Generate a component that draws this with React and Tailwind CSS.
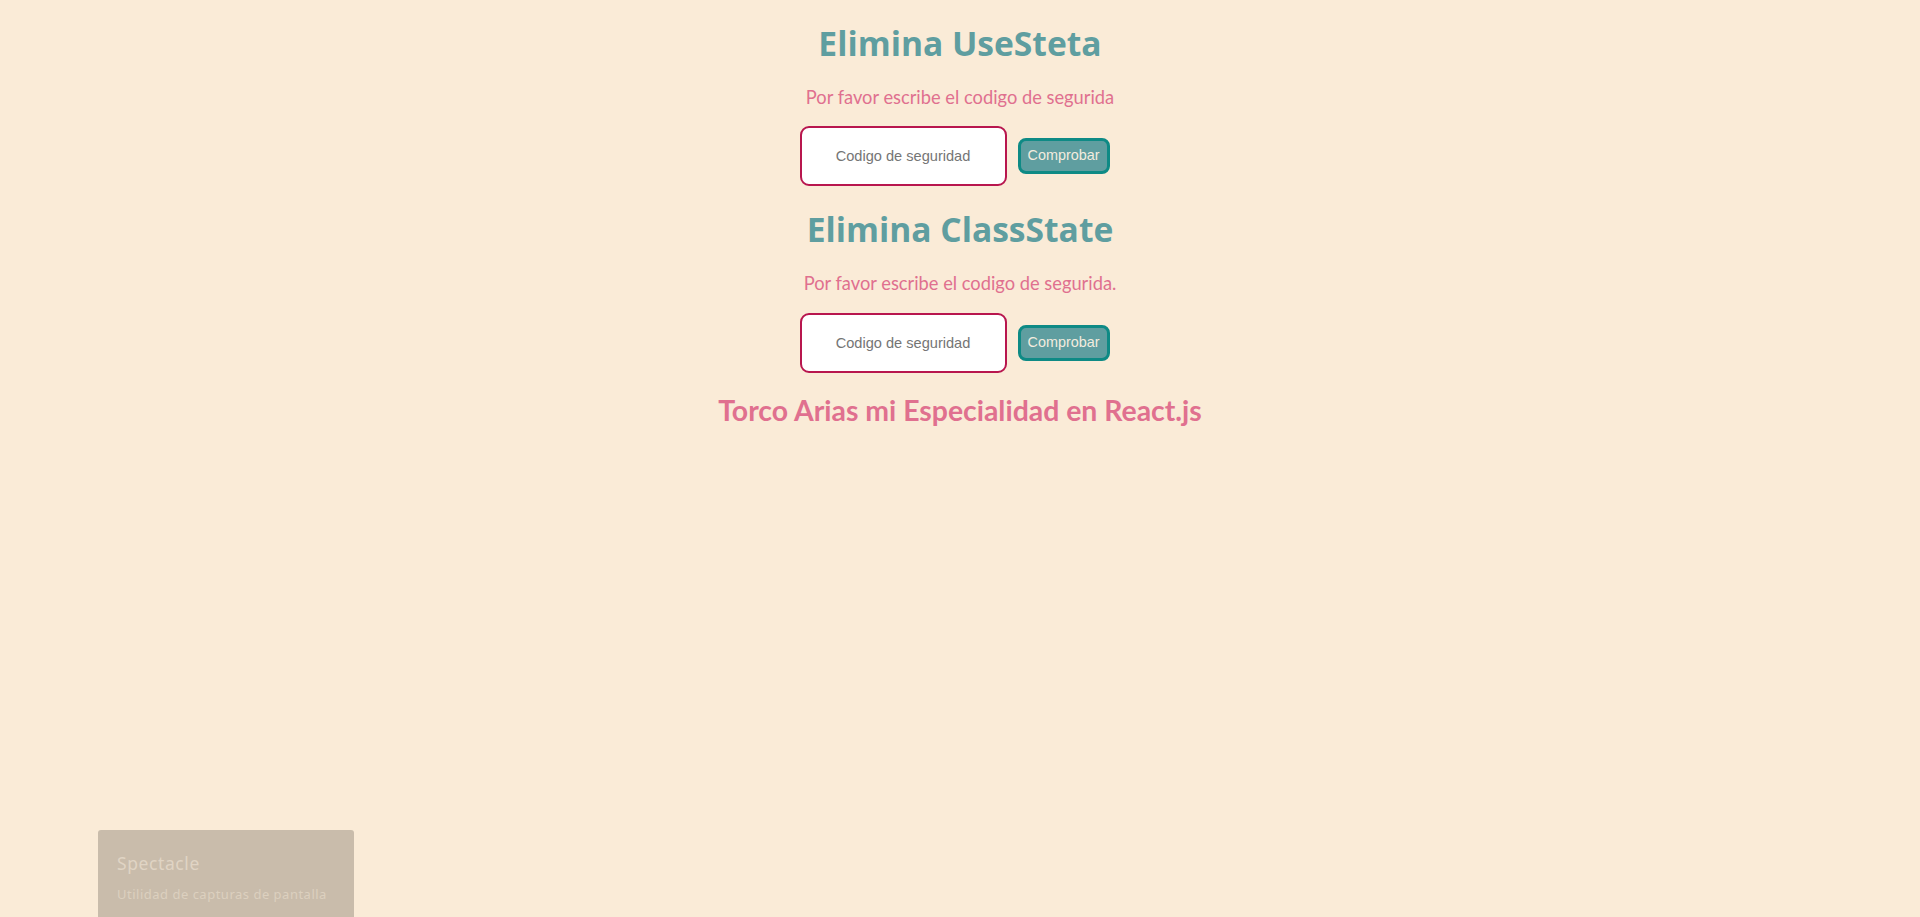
import React, { useState } from "react";

const SecurityBlock = ({ title, subtitle, titleGap }) => {
  const [value, setValue] = useState("");

  return (
    <div className="flex flex-col items-center">
      <h1 className="text-[33.6px] leading-none font-bold text-[#5f9ea0] [font-family:'Open_Sans',sans-serif]">
        {title}
      </h1>
      <p
        className={`${titleGap} text-[18.3px] leading-none text-[#e0708f] [font-family:Lato,sans-serif]`}
      >
        {subtitle}
      </p>
      <div className="mt-[20px] flex items-center gap-[11px] pr-[11px]">
        <input
          value={value}
          onChange={(e) => setValue(e.target.value)}
          placeholder="Codigo de seguridad"
          className="w-[207px] h-[60px] bg-white border-2 border-[#b8164e] rounded-[9px] text-center text-[14.6px] text-gray-700 placeholder:text-[#757575] outline-none [font-family:'Liberation_Sans',Arial,sans-serif]"
        />
        <button className="w-[92px] h-[36px] bg-[#5f9ea0] border-[3px] border-[#0e8a85] rounded-[8px] text-[14.4px] text-[#f3ecdf] [font-family:'Liberation_Sans',Arial,sans-serif]">
          Comprobar
        </button>
      </div>
    </div>
  );
};

const App = () => {
  return (
    <div className="relative min-h-screen bg-[#faebd7] flex flex-col items-center pt-[27px] overflow-hidden">
      <SecurityBlock
        title="Elimina UseSteta"
        subtitle="Por favor escribe el codigo de segurida"
        titleGap="mt-[27px]"
      />
      <div className="mt-[27px]">
        <SecurityBlock
          title="Elimina ClassState"
          subtitle="Por favor escribe el codigo de segurida."
          titleGap="mt-[28px]"
        />
      </div>
      <h2 className="mt-[23px] text-[28.4px] leading-none font-bold text-[#e0708f] [font-family:Lato,sans-serif]">
        Torco Arias mi Especialidad en React.js
      </h2>

      {/* notificación del sistema */}
      <div className="absolute left-[98px] top-[830px] w-[256px] h-[100px] rounded-t-[3px] bg-[#c9bcab] px-[19px] pt-[25px] [font-family:'Noto_Sans',sans-serif]">
        <div className="text-[17.5px] leading-none tracking-[0.6px] text-[#e0d4c4]">
          Spectacle
        </div>
        <div className="mt-[15px] whitespace-nowrap text-[13px] leading-none tracking-[0.5px] text-[#dcd0bf]">
          Utilidad de capturas de pantalla
        </div>
      </div>
    </div>
  );
};

export default App;
